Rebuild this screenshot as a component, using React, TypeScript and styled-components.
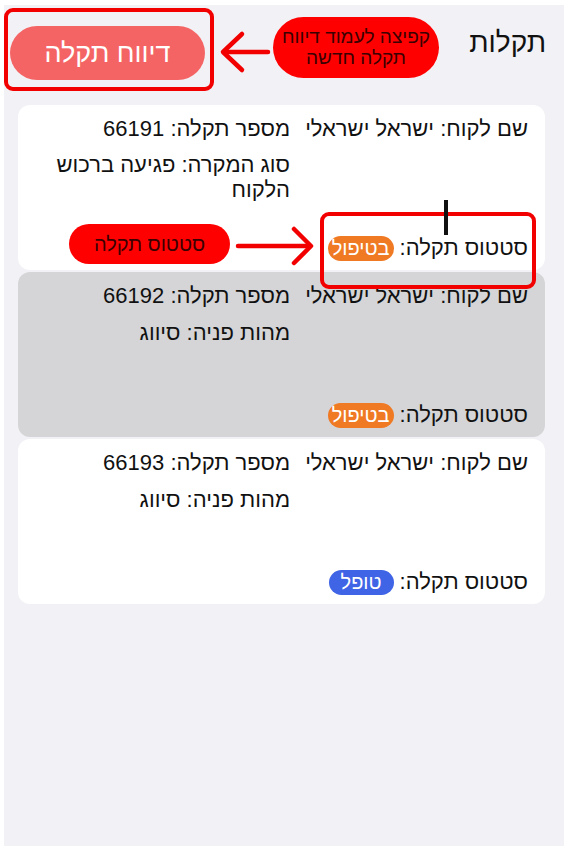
import React from "react";
import styled, { createGlobalStyle } from "styled-components";

const Global = createGlobalStyle`
  html, body { margin: 0; padding: 0; background: #ffffff; }
  body { font-family: "Liberation Sans", "DejaVu Sans", Arial, sans-serif; }
  * { box-sizing: border-box; }
`;

const Page = styled.div`
  position: relative;
  width: 574px;
  height: 858px;
  padding: 5px 10px 12px 4px;
`;

const Screen = styled.div`
  direction: rtl;
  height: 100%;
  background: #f2f2f6;
  display: flex;
  flex-direction: column;
`;

const Header = styled.div`
  height: 100px;
  display: flex;
  align-items: center;
  justify-content: space-between;
  padding: 0 18px 4px 6px;
`;

const Title = styled.h1`
  margin: 0 0 20px;
  font-size: 28px;
  font-weight: 400;
  color: #111;
`;

const ReportButton = styled.button`
  direction: rtl;
  width: 195px;
  height: 54px;
  border: none;
  border-radius: 27px;
  background: #f56464;
  color: #fff;
  font-family: inherit;
  font-size: 27px;
  padding: 0;
  margin-top: 0;
`;

const List = styled.div`
  display: flex;
  flex-direction: column;
  gap: 2px;
  padding: 0 19px 0 14px;
`;

const Card = styled.div<{ $selected?: boolean }>`
  height: 165px;
  border-radius: 12px;
  background: ${(p) => (p.$selected ? "#d5d5d7" : "#ffffff")};
  padding: 11px 17px 9px;
  display: flex;
  flex-direction: column;
  justify-content: space-between;
`;

const TopRow = styled.div`
  display: flex;
  gap: 6px;
`;

const MainCol = styled.div`
  width: 232px;
  white-space: nowrap;
  font-size: 22px;
  line-height: 25px;
  color: #111;
`;

const DetailCol = styled.div<{ $gap: number }>`
  width: 244px;
  display: flex;
  flex-direction: column;
  gap: ${(p) => p.$gap}px;
  font-size: 22px;
  line-height: 25px;
  color: #111;
`;

const Line = styled.div``;

const StatusRow = styled.div`
  display: flex;
  align-items: center;
  gap: 6px;
  font-size: 22px;
  line-height: 26px;
  color: #111;
`;

const Badge = styled.span<{ $color: string; $pad: number }>`
  display: inline-block;
  background: ${(p) => p.$color};
  color: #fff;
  border-radius: 13px;
  padding: 0 ${(p) => p.$pad}px;
  font-size: 20px;
  line-height: 25px;
`;

/* annotation overlay */
const Overlay = styled.div`
  position: absolute;
  inset: 0;
  pointer-events: none;
  direction: rtl;
  font-family: "Liberation Sans", "DejaVu Sans", Arial, sans-serif;
`;

const Frame = styled.div<{ $x: number; $y: number; $w: number; $h: number }>`
  position: absolute;
  left: ${(p) => p.$x}px;
  top: ${(p) => p.$y}px;
  width: ${(p) => p.$w}px;
  height: ${(p) => p.$h}px;
  border: 4px solid #f20000;
  border-radius: 9px;
`;

const Callout = styled.div<{ $x: number; $y: number; $w: number; $h: number; $size: number }>`
  position: absolute;
  left: ${(p) => p.$x}px;
  top: ${(p) => p.$y}px;
  width: ${(p) => p.$w}px;
  height: ${(p) => p.$h}px;
  border-radius: ${(p) => p.$h / 2}px;
  background: #ff0000;
  color: #3a0000;
  font-size: ${(p) => p.$size}px;
  line-height: 1.1;
  display: flex;
  align-items: center;
  justify-content: center;
  text-align: center;
`;

const ArrowSvg = styled.svg`
  position: absolute;
  left: 0;
  top: 0;
`;

const Cursor = styled.div`
  position: absolute;
  left: 444px;
  top: 200px;
  width: 4px;
  height: 35px;
  background: #111;
`;

type Ticket = {
  id: number;
  detail: string;
  status: "progress" | "done";
  gap: number;
};

const tickets: Ticket[] = [
  { id: 66191, detail: "סוג המקרה: פגיעה ברכוש הלקוח", status: "progress", gap: 11 },
  { id: 66192, detail: "מהות פניה: סיווג", status: "progress", gap: 12 },
  { id: 66193, detail: "מהות פניה: סיווג", status: "done", gap: 12 },
];

export default function App() {
  return (
    <>
      <Global />
      <Page>
        <Screen>
          <Header>
            <Title>תקלות</Title>
            <ReportButton>דיווח תקלה</ReportButton>
          </Header>
          <List>
            {tickets.map((t, i) => (
              <Card key={t.id} $selected={i === 1}>
                <TopRow>
                  <MainCol>שם לקוח: ישראל ישראלי</MainCol>
                  <DetailCol $gap={t.gap}>
                    <Line>מספר תקלה: {t.id}</Line>
                    <Line>{t.detail}</Line>
                  </DetailCol>
                </TopRow>
                <StatusRow>
                  <span>סטטוס תקלה:</span>
                  {t.status === "progress" ? (
                    <Badge $color="#f07a24" $pad={4}>בטיפול</Badge>
                  ) : (
                    <Badge $color="#3f64e6" $pad={12}>טופל</Badge>
                  )}
                </StatusRow>
              </Card>
            ))}
          </List>
        </Screen>
        <Overlay>
          <Frame $x={4} $y={8} $w={210} $h={83} />
          <Callout $x={273} $y={17} $w={166} $h={61} $size={19}>
            קפיצה לעמוד דיווח
            <br />
            תקלה חדשה
          </Callout>
          <Callout $x={69} $y={224} $w={161} $h={40} $size={20}>
            סטטוס תקלה
          </Callout>
          <Frame $x={320} $y={212} $w={216} $h={77} />
          <Cursor />
          <ArrowSvg width="574" height="858" viewBox="0 0 574 858">
            <g stroke="#f20000" strokeWidth="4.5" strokeLinecap="round" strokeLinejoin="round" fill="none">
              <path d="M224 52 H268" />
              <path d="M242 34 L223 52 L242 70" />
              <path d="M238 246 H309" />
              <path d="M294 229 L311 246 L294 263" />
            </g>
          </ArrowSvg>
        </Overlay>
      </Page>
    </>
  );
}
